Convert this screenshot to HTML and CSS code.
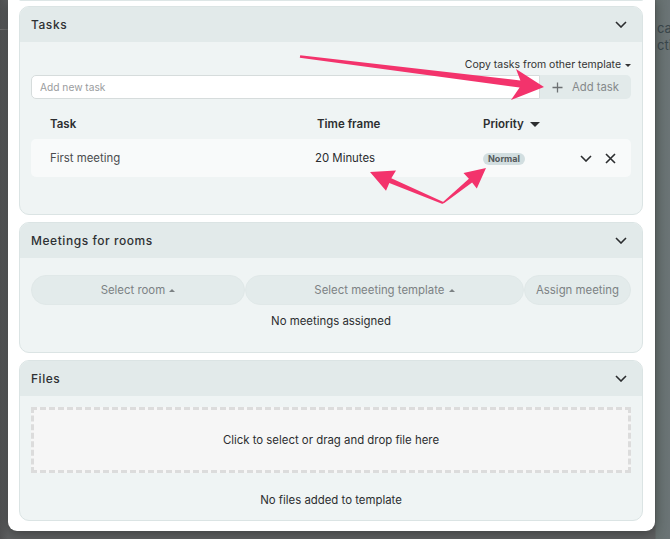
FILE: index.html
```html
<!DOCTYPE html>
<html lang="en">
<head>
  <meta charset="UTF-8" />
  <title>Template tasks</title>
  <link rel="stylesheet" href="styles.css">
</head>
<body>
  <!-- page behind the modal -->
  <div class="behind">
    <span class="behind-line"></span>
    <span class="behind-text t1">cal</span>
    <span class="behind-text t2">cti</span>
  </div>

  <div class="modal">
    <div class="card-tail"></div>

    <!-- Tasks -->
    <section class="card">
      <div class="card-head">
        <span class="card-title">Tasks</span>
        <svg class="chev" width="12" height="7" viewBox="0 0 12 7"><path d="M1 1l5 5 5-5" /></svg>
      </div>
      <div class="card-body tasks-body">
        <div class="copy-link">Copy tasks from other template <span class="tri-down"></span></div>
        <div class="add-row">
          <input class="task-input" placeholder="Add new task" />
          <button class="add-btn">
            <svg width="11" height="11" viewBox="0 0 11 11"><path d="M5.5 0.5v10M0.5 5.5h10" /></svg>
            Add task
          </button>
        </div>
        <div class="task-grid task-head">
          <span>Task</span>
          <span>Time frame</span>
          <span>Priority <span class="tri-big"></span></span>
          <span></span>
        </div>
        <div class="task-grid task-row">
          <span>First meeting</span>
          <span>20 Minutes</span>
          <span><span class="badge">Normal</span></span>
          <span class="row-actions">
            <svg class="chev" width="12" height="7" viewBox="0 0 12 7"><path d="M1 1l5 5 5-5" /></svg>
            <svg class="cross" width="11" height="11" viewBox="0 0 11 11"><path d="M1 1l9 9M10 1l-9 9" /></svg>
          </span>
        </div>
      </div>
    </section>

    <!-- Meetings for rooms -->
    <section class="card">
      <div class="card-head">
        <span class="card-title">Meetings for rooms</span>
        <svg class="chev" width="12" height="7" viewBox="0 0 12 7"><path d="M1 1l5 5 5-5" /></svg>
      </div>
      <div class="card-body meetings-body">
        <div class="pill-row">
          <button class="pill pill-room">Select room <span class="tri-up"></span></button>
          <button class="pill pill-template">Select meeting template <span class="tri-up"></span></button>
          <button class="pill pill-assign">Assign meeting</button>
        </div>
        <div class="empty-note">No meetings assigned</div>
      </div>
    </section>

    <!-- Files -->
    <section class="card">
      <div class="card-head">
        <span class="card-title">Files</span>
        <svg class="chev" width="12" height="7" viewBox="0 0 12 7"><path d="M1 1l5 5 5-5" /></svg>
      </div>
      <div class="card-body files-body">
        <div class="dropzone">Click to select or drag and drop file here</div>
        <div class="empty-note files-note">No files added to template</div>
      </div>
    </section>
  </div>

  <!-- annotation arrows -->
  <svg class="arrows" width="670" height="539" viewBox="0 0 670 539">
    <polygon points="300.2,55.3 520.4,80.5 516,69 544,87 511,100 519.6,87.5 299.8,57.7" />
    <polygon points="443.4,202.1 391.3,178.3 396,170.4 370,172 386,190.8 389.3,182.9 442.6,203.9" />
    <polygon points="443.6,203.6 472.1,182.5 476.8,188.4 486,168 463.5,173 468.9,178.7 442.4,202.4" />
  </svg>
</body>
</html>
```

FILE: styles.css
```css
body {
  margin: 0;
  width: 670px;
  height: 539px;
  overflow: hidden;
  background: #66696b;
  font-family: Inter, "Noto Sans", sans-serif;
  color: #333;
  position: relative;
}

.behind {
  position: absolute;
  inset: 0;
  background: linear-gradient(90deg, #505152 0, #5d5f60 8px, #5d5f60 655px, #66706f 656px, #6b7476 100%);
}

.behind-line {
  position: absolute;
  left: 0;
  top: 29px;
  width: 8px;
  height: 1px;
  background: #6e6e6e;
}

.behind-text {
  position: absolute;
  left: 657px;
  width: 13px;
  overflow: hidden;
  white-space: nowrap;
  font-size: 13px;
  color: #3a474c;
}

.t1 { top: 20px; }
.t2 { top: 37px; }

.modal {
  position: relative;
  margin-left: 8px;
  width: 647px;
  height: 531px;
  box-sizing: border-box;
  padding: 0 12px 0 11px;
  background: #fff;
  border-radius: 0 0 9px 9px;
  box-shadow: 0 2px 12px rgba(0,0,0,0.35);
  display: flex;
  flex-direction: column;
  gap: 7px;
}

.card-tail {
  height: 1px;
  margin-top: -1px;
  border: 1px solid #dde6e6;
  border-top: none;
  border-radius: 0 0 10px 10px;
  background: #f3f7f7;
  margin-bottom: -2px;
}

.card {
  border: 1px solid #dbe4e4;
  border-radius: 10px;
  overflow: hidden;
  background: #eff4f4;
}

.card-head {
  height: 35px;
  background: #e2eaea;
  display: flex;
  align-items: center;
  justify-content: space-between;
  padding: 0 15px 0 11px;
}

.card-title {
  font-size: 12px;
  font-weight: 500;
  letter-spacing: 0.55px;
  color: #2e3133;
}

.chev path {
  fill: none;
  stroke: #2b2d2f;
  stroke-width: 1.6;
}

.card-body {
  padding: 0 11px;
}

/* Tasks */
.tasks-body {
  padding-top: 15px;
  padding-bottom: 37px;
}

.copy-link {
  text-align: right;
  font-size: 10.5px;
  color: #333;
  line-height: 15px;
  margin-bottom: 3px;
}

.tri-down {
  display: inline-block;
  border-left: 3px solid transparent;
  border-right: 3px solid transparent;
  border-top: 3px solid #333;
  vertical-align: middle;
  margin-left: 1px;
}

.add-row {
  display: flex;
  height: 24px;
}

.task-input {
  flex: 1;
  box-sizing: border-box;
  height: 24px;
  border: 1px solid #d6dcdc;
  border-radius: 5px 0 0 5px;
  padding: 0 8px;
  font: 10.2px Inter, sans-serif;
  color: #333;
  background: #fff;
  outline: none;
}

.task-input::placeholder {
  color: #9a9c9e;
}

.add-btn {
  width: 91px;
  border: none;
  border-radius: 0 5px 5px 0;
  background: #e2eaea;
  font: 11.3px Inter, sans-serif;
  color: #85898b;
  display: flex;
  align-items: center;
  justify-content: center;
  gap: 9px;
  padding: 0;
}

.add-btn path {
  stroke: #6d7173;
  stroke-width: 1.3;
}

.task-grid {
  display: grid;
  grid-template-columns: 267px 166px 1fr 51px;
  padding-left: 19px;
  align-items: center;
}

.task-head {
  height: 30px;
  margin-top: 10px;
  font-size: 11.5px;
  font-weight: 600;
  color: #2c2e30;
}

.tri-big {
  display: inline-block;
  border-left: 5px solid transparent;
  border-right: 5px solid transparent;
  border-top: 5px solid #2c2e30;
  vertical-align: middle;
  margin-left: 3px;
}

.task-row {
  height: 38px;
  background: #f8fafa;
  border-radius: 5px;
  font-size: 11.4px;
  color: #4a4c4e;
}

.task-row span:nth-child(2) {
  margin-left: -2px;
  color: #2a2c2e;
}

.badge {
  display: inline-block;
  background: #d2dee0;
  color: #555a5c;
  font-size: 9px;
  font-weight: 700;
  line-height: 12px;
  padding: 0 5px;
  border-radius: 7px;
}

.row-actions {
  display: flex;
  align-items: center;
  gap: 13px;
}

.cross path {
  stroke: #2b2d2f;
  stroke-width: 1.6;
}

/* Meetings */
.meetings-body {
  padding-top: 17px;
  padding-bottom: 15px;
}

.pill-row {
  display: flex;
  height: 30px;
}

.pill {
  border: 1px solid #e0e8e8;
  background: #e3ebeb;
  border-radius: 15px;
  font: 11.4px Inter, sans-serif;
  color: #7c8284;
  padding: 0;
}

.pill-room { width: 214px; }
.pill-template { width: 279px; }
.pill-assign { width: 107px; }

.tri-up {
  display: inline-block;
  border-left: 3px solid transparent;
  border-right: 3px solid transparent;
  border-bottom: 3px solid #7c8284;
  vertical-align: middle;
  margin-left: 1px;
}

.empty-note {
  text-align: center;
  font-size: 11.4px;
  color: #2c2e30;
  line-height: 32px;
}

/* Files */
.files-body {
  padding-top: 11px;
  padding-bottom: 0;
}

.dropzone {
  height: 66px;
  box-sizing: border-box;
  border: 3px dashed #dcdcdc;
  background: #f6f6f6;
  display: flex;
  align-items: center;
  justify-content: center;
  font-size: 11.4px;
  color: #2c2e30;
}

.files-note {
  line-height: 40px;
  margin-top: 7px;
}

.arrows {
  position: absolute;
  left: 0;
  top: 0;
  pointer-events: none;
}

.arrows polygon {
  fill: #f3336c;
}
```
